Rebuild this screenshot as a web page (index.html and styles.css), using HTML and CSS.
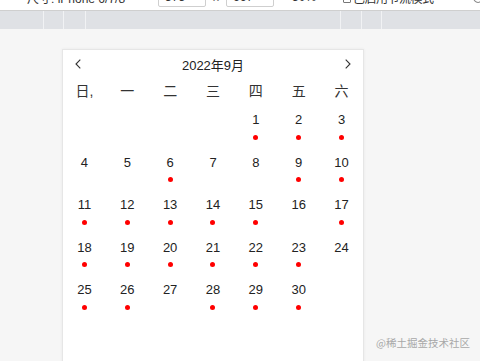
FILE: index.html
```html
<!DOCTYPE html>
<html lang="zh-CN">
<head>
<meta charset="utf-8">
<title>日历</title>
<link rel="stylesheet" href="styles.css">
</head>
<body>
<div class="devbar">
  <span class="dev-device">尺寸: iPhone 6/7/8</span><span class="caret">▾</span>
  <span class="dev-input">375</span><span class="dev-x">x</span><span class="dev-input">667</span>
  <span class="dev-zoom">50%</span><span class="caret">▾</span>
  <span class="dev-check"></span><span class="dev-throttle">已启用节流模式</span><span class="caret">▾</span>
  <span class="dev-icon"></span>
</div>
<div class="tabstrip">
  <span class="seg s1"></span><span class="seg s2"></span><span class="seg s3"></span><span class="seg s4"></span><span class="seg s5"></span><span class="seg s6"></span><span class="seg s7"></span>
</div>
<main class="stage">
  <section class="calendar">
    <header class="cal-head">
      <svg class="chev" width="6" height="10" viewBox="0 0 6 10"><path d="M5.3 0.6 L1 5 L5.3 9.4" fill="none" stroke="#333" stroke-width="1.1"/></svg>
      <span class="cal-title">2022年9月</span>
      <svg class="chev" width="6" height="10" viewBox="0 0 6 10"><path d="M0.7 0.6 L5 5 L0.7 9.4" fill="none" stroke="#333" stroke-width="1.1"/></svg>
    </header>
    <div class="weekdays">
      <span>日,</span><span>一</span><span>二</span><span>三</span><span>四</span><span>五</span><span>六</span>
    </div>
    <div class="days">
      <div class="day"></div><div class="day"></div><div class="day"></div><div class="day"></div>
      <div class="day"><span class="num">1</span><i class="dot"></i></div>
      <div class="day"><span class="num">2</span><i class="dot"></i></div>
      <div class="day"><span class="num">3</span><i class="dot"></i></div>
      <div class="day"><span class="num">4</span></div>
      <div class="day"><span class="num">5</span></div>
      <div class="day"><span class="num">6</span><i class="dot"></i></div>
      <div class="day"><span class="num">7</span></div>
      <div class="day"><span class="num">8</span></div>
      <div class="day"><span class="num">9</span><i class="dot"></i></div>
      <div class="day"><span class="num">10</span><i class="dot"></i></div>
      <div class="day"><span class="num">11</span><i class="dot"></i></div>
      <div class="day"><span class="num">12</span><i class="dot"></i></div>
      <div class="day"><span class="num">13</span><i class="dot"></i></div>
      <div class="day"><span class="num">14</span><i class="dot"></i></div>
      <div class="day"><span class="num">15</span><i class="dot"></i></div>
      <div class="day"><span class="num">16</span></div>
      <div class="day"><span class="num">17</span><i class="dot"></i></div>
      <div class="day"><span class="num">18</span><i class="dot"></i></div>
      <div class="day"><span class="num">19</span><i class="dot"></i></div>
      <div class="day"><span class="num">20</span><i class="dot"></i></div>
      <div class="day"><span class="num">21</span><i class="dot"></i></div>
      <div class="day"><span class="num">22</span><i class="dot"></i></div>
      <div class="day"><span class="num">23</span><i class="dot"></i></div>
      <div class="day"><span class="num">24</span></div>
      <div class="day"><span class="num">25</span><i class="dot"></i></div>
      <div class="day"><span class="num">26</span><i class="dot"></i></div>
      <div class="day"><span class="num">27</span></div>
      <div class="day"><span class="num">28</span><i class="dot"></i></div>
      <div class="day"><span class="num">29</span><i class="dot"></i></div>
      <div class="day"><span class="num">30</span><i class="dot"></i></div>
      <div class="day"></div>
    </div>
  </section>
  <div class="watermark">@稀土掘金技术社区</div>
</main>
</body>
</html>
```
FILE: styles.css
```css
* { box-sizing: border-box; }
html, body { margin: 0; padding: 0; height: 100%; overflow: hidden; }
body {
  background: #f6f6f6;
  font-family: "Liberation Sans", "Noto Sans CJK SC", sans-serif;
  color: #333;
}
.devbar {
  height: 27px;
  margin-top: -16px;
  background: #fff;
  border-bottom: 1px solid #cfcfcf;
  display: flex;
  align-items: center;
  padding-left: 27px;
  font-size: 12px;
  color: #333;
  white-space: nowrap;
  overflow: hidden;
}
.devbar > span { flex-shrink: 0; }
.caret { font-size: 9px; color: #888; margin-left: 6px; }
.dev-input {
  width: 48px;
  height: 20px;
  border: 1px solid #cfcfcf;
  border-radius: 2px;
  padding-left: 6px;
  line-height: 18px;
  margin-left: 22px;
}
.dev-x { margin-left: 7px; margin-right: -15px; color: #666; }
.dev-zoom { margin-left: 18px; }
.dev-check {
  width: 8px; height: 12px; border: 1px solid #777; border-radius: 1px;
  margin-left: 16px; margin-right: 2px;
}
.dev-throttle { letter-spacing: -0.5px; }
.dev-icon {
  width: 10px; height: 12px; border: 1px solid #888; border-radius: 50%;
  margin-left: 28px;
}
.tabstrip {
  height: 18px;
  background: #dfe1e5;
  display: flex;
}
.seg { height: 100%; border-right: 1px solid #f1f2f4; }
.s1 { width: 44px; }
.s2 { width: 20px; }
.s3 { width: 22px; }
.s4 { width: 255px; }
.s5 { width: 21px; }
.s6 { width: 20px; }
.s7 { flex: 1; border-right: 0; }
.stage {
  position: relative;
  height: calc(100% - 29px);
  padding: 20px 0 0 62px;
}
.calendar {
  width: 302px;
  height: 330px;
  background: #fff;
  border: 1px solid #e6e6e6;
  box-shadow: 0 0 3px rgba(0, 0, 0, 0.06);
}
.cal-head {
  height: 28px;
  padding: 0 12px;
  display: flex;
  align-items: center;
  justify-content: space-between;
}
.chev { display: block; }
.cal-title { font-size: 13px; color: #222; }
.weekdays {
  display: grid;
  grid-template-columns: repeat(7, 1fr);
  height: 27px;
  line-height: 27px;
  text-align: center;
  font-size: 14px;
  color: #333;
}
.days {
  display: grid;
  grid-template-columns: repeat(7, 1fr);
  grid-auto-rows: 42.5px;
  padding-top: 5px;
}
.day {
  display: flex;
  flex-direction: column;
  align-items: center;
}
.num {
  font-size: 13px;
  line-height: 20px;
  color: #222;
}
.dot {
  display: block;
  width: 5px;
  height: 5px;
  border-radius: 50%;
  background: #f00;
  margin-top: 4.5px;
}
.watermark {
  position: absolute;
  right: 10px;
  bottom: 11px;
  font-size: 10.5px;
  color: #a8a8a8;
  font-family: "Noto Sans CJK SC", sans-serif;
}
```
